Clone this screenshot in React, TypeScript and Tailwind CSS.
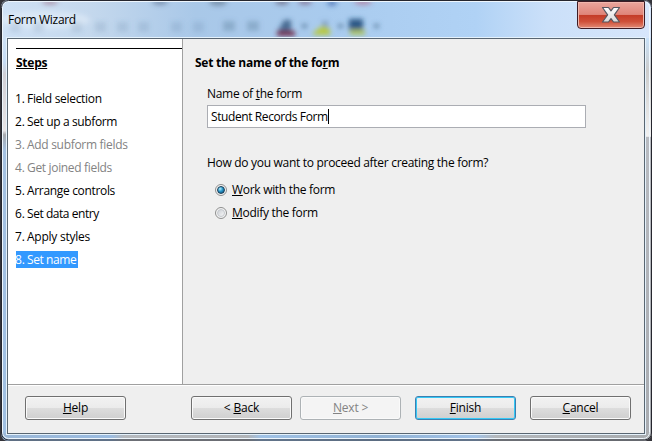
import type { ReactNode } from "react";

type Step = { label: string; tracking: string; state?: "disabled" | "active" };

const steps: Step[] = [
  { label: "Field selection", tracking: "tracking-[-0.3px]" },
  { label: "Set up a subform", tracking: "tracking-[-0.37px]" },
  { label: "Add subform fields", tracking: "tracking-[-0.3px]", state: "disabled" },
  { label: "Get joined fields", tracking: "tracking-[-0.33px]", state: "disabled" },
  { label: "Arrange controls", tracking: "tracking-[-0.33px]" },
  { label: "Set data entry", tracking: "tracking-[-0.45px]" },
  { label: "Apply styles", tracking: "tracking-[-0.25px]" },
  { label: "Set name", tracking: "tracking-[-0.4px]", state: "active" },
];

function Key({ children }: { children: ReactNode }) {
  return <span className="underline decoration-1 underline-offset-1">{children}</span>;
}

function StepRow({ step, index }: { step: Step; index: number }) {
  const color =
    step.state === "active"
      ? "bg-[#3399ff] text-white w-[62px]"
      : step.state === "disabled"
        ? "text-[#838383]"
        : "text-black";
  return (
    <li className={`flex h-[17px] items-center ${color}`}>
      <span className="-ml-px w-3 shrink-0 tracking-[-0.2px]">{index}.</span>
      <span className={step.tracking}>{step.label}</span>
    </li>
  );
}

function Button({ children, kind = "normal" }: { children: ReactNode; kind?: "normal" | "disabled" | "default" }) {
  const look =
    kind === "disabled"
      ? "border-[#adb2b5] bg-[#f4f4f4] text-[#838383] shadow-[inset_0_0_0_1px_#fafafa]"
      : kind === "default"
        ? "border-[#3c7fb1] bg-[linear-gradient(to_bottom,#f2f2f2_0%,#ebebeb_49%,#dddddd_50%,#cfcfcf_100%)] shadow-[inset_0_0_0_1px_#35c8f5]"
        : "border-[#707070] bg-[linear-gradient(to_bottom,#f2f2f2_0%,#ebebeb_49%,#dddddd_50%,#cfcfcf_100%)] shadow-[inset_0_0_0_1px_#fafafa]";
  return (
    <button className={`flex h-6 w-[101px] items-center justify-center rounded-[3px] border leading-4 tracking-[-0.2px] ${look}`}>
      <span>{children}</span>
    </button>
  );
}

function Radio({ children, checked = false }: { children: ReactNode; checked?: boolean }) {
  return (
    <label className="flex h-[17px] items-center gap-[5px]">
      <span className="flex size-3 shrink-0 items-center justify-center rounded-full border border-[#8e8f8f] bg-[#f4f4f4]">
        <span
          className={
            checked
              ? "size-2 rounded-full border border-[#183c56] bg-[radial-gradient(circle_at_35%_30%,#b7f0ff_0%,#2897ca_45%,#104269_100%)]"
              : "size-2 rounded-full border border-[#c4c8cd] bg-linear-to-br from-[#cbcfd5] to-[#f7f7f7]"
          }
        />
      </span>
      <span>{children}</span>
    </label>
  );
}

function GlassBackdrop() {
  return (
    <svg className="absolute inset-0" width="652" height="441" viewBox="0 0 652 441">
      <defs>
        <linearGradient id="top" x1="0" x2="1" y1="0" y2="0">
          <stop offset="0" stopColor="#cfe1f5" />
          <stop offset=".14" stopColor="#c4d8ed" />
          <stop offset=".3" stopColor="#a9c8e8" />
          <stop offset=".5" stopColor="#a9cbee" />
          <stop offset=".73" stopColor="#b0d2f5" />
          <stop offset=".84" stopColor="#cbe0f9" />
          <stop offset="1" stopColor="#d7e6fb" />
        </linearGradient>
        <linearGradient id="left" x1="0" x2="0" y1="0" y2="1">
          <stop offset="0" stopColor="#cfe2f6" />
          <stop offset=".06" stopColor="#c6dcf4" />
          <stop offset=".09" stopColor="#d0cfd5" />
          <stop offset=".23" stopColor="#e6e4e6" />
          <stop offset=".24" stopColor="#a7aaaf" />
          <stop offset=".28" stopColor="#a4c1e1" />
          <stop offset="1" stopColor="#9fbfe2" />
        </linearGradient>
        <linearGradient id="right" x1="0" x2="0" y1="0" y2="1">
          <stop offset="0" stopColor="#c8e1f8" />
          <stop offset=".08" stopColor="#cccccc" />
          <stop offset=".244" stopColor="#f1f1f1" />
          <stop offset=".246" stopColor="#b8bbc1" />
          <stop offset="1" stopColor="#a8abb0" />
        </linearGradient>
        <linearGradient id="bottom" x1="0" x2="1" y1="0" y2="0">
          <stop offset="0" stopColor="#9bb8d8" />
          <stop offset=".17" stopColor="#9bbce1" />
          <stop offset=".19" stopColor="#b5b9be" />
          <stop offset=".38" stopColor="#b1b4b8" />
          <stop offset=".4" stopColor="#a0c2e6" />
          <stop offset=".58" stopColor="#92b3d5" />
          <stop offset=".73" stopColor="#a2c3e8" />
          <stop offset=".76" stopColor="#b4b8bc" />
          <stop offset="1" stopColor="#a7abaf" />
        </linearGradient>
        <filter id="soft" x="-50%" y="-50%" width="200%" height="200%">
          <feGaussianBlur stdDeviation="2.8" />
        </filter>
        <clipPath id="bar"><rect x="2" y="2" width="648" height="35" /></clipPath>
      </defs>
      <rect width="652" height="39" fill="url(#top)" />
      <rect y="38" width="8" height="403" fill="url(#left)" />
      <rect x="644" y="38" width="8" height="403" fill="url(#right)" />
      <rect y="433" width="652" height="8" fill="url(#bottom)" />
      <g clipPath="url(#bar)">
        <g filter="url(#soft)">
          <ellipse cx="50" cy="2" rx="8" ry="3" fill="#96627a" opacity=".5" />
          <ellipse cx="160" cy="2" rx="8" ry="3" fill="#465b7e" opacity=".5" />
          <ellipse cx="218" cy="2" rx="9" ry="4" fill="#52657e" opacity=".5" />
          <ellipse cx="282" cy="2" rx="7" ry="3" fill="#5a4e68" opacity=".6" />
          <ellipse cx="305" cy="2" rx="7" ry="3" fill="#6d4666" opacity=".55" />
          <ellipse cx="332" cy="3" rx="5" ry="3" fill="#2854a0" opacity=".6" />
          <ellipse cx="363" cy="2" rx="9" ry="3" fill="#b64e70" opacity=".5" />
          <ellipse cx="45" cy="20" rx="45" ry="9" fill="#eaf2fb" opacity=".5" />
          {[15, 38, 76, 100, 122, 143, 176, 198].map((x) => (
            <rect key={x} x={x - 5} y="22" width="11" height="10" fill="#507194" opacity=".17" />
          ))}
          {[229, 253].map((x) => (
            <rect key={x} x={x - 6} y="21" width="12" height="10" fill="#507194" opacity=".34" />
          ))}
          <path d="M278 31l6-11h7v16h-13z" fill="#30547c" opacity=".8" />
          <path d="M277 31h18v5h-18z" fill="#722b48" />
          <path d="M322 21h6v8h-6z" fill="#607e99" opacity=".55" />
          <path d="M313 33l9-7 8 3v6h-17z" fill="#b8c943" />
          <path d="M349 19h14v12h-14z" fill="#1d4c7a" opacity=".9" />
          <path d="M350 30h15v5h-15z" fill="#afc663" />
          {[304, 340, 376].map((x) => (
            <rect key={x} x={x - 2} y="24" width="5" height="4" fill="#3f617f" opacity=".65" />
          ))}
        </g>
      </g>
      <rect x="2.5" y="1.5" width="647" height="437" rx="6" fill="none" stroke="#eef6fd" />
      <rect x="1.5" y=".5" width="650" height="439.5" rx="7" fill="none" stroke="#25262e" />
      <path d="M0 0h7Q1 1 1 8v425q0 7 7 8H0zM652 0h-6q5 2 6 7zM652 441h-7q6-2 7-7z" fill="#34343a" />
    </svg>
  );
}

export default function App() {
  return (
    <div className="relative flex h-[441px] w-[652px] flex-col overflow-hidden px-[7px] pb-[7px] font-['Open_Sans','Noto_Sans',sans-serif] text-[12px] leading-[17px] tracking-[-0.3px] text-black">
      <GlassBackdrop />
      <header className="relative flex h-[38px] shrink-0 items-start justify-between">
        <h1 className="pt-[11px] pl-px">Form Wizard</h1>
        <button
          aria-label="Close"
          className="mt-px flex h-7 w-[68px] items-center justify-center rounded-b-[4px] border border-[#3d1c25] bg-[linear-gradient(to_bottom,#e9a69d_0%,#df8579_48%,#c33b26_50%,#cf5039_75%,#e28b76_100%)] shadow-[inset_0_0_0_1px_#efb7ad]"
        >
          <svg width="20" height="18" viewBox="0 0 20 18">
            <defs>
              <linearGradient id="cross" x2="0" y2="1">
                <stop stopColor="#fff" />
                <stop offset="1" stopColor="#d8d8d8" />
              </linearGradient>
            </defs>
            <path d="M1.5 1.5h6L10 4.8l2.5-3.3h6L13.4 8.8l5.1 7.2h-6L10 12.7 7.5 16h-6l5.1-7.2z" fill="url(#cross)" stroke="#555760" strokeWidth="1.2" strokeLinejoin="round" />
          </svg>
        </button>
      </header>
      <main className="relative flex min-h-0 flex-1 flex-col border border-[#596672] bg-[#efefef] shadow-[0_0_0_1px_#e5f2fc]">
        <div className="flex h-[345px] shrink-0">
          <nav className="w-[175px] border-r border-[#a0a0a0] bg-white pt-[9px] pl-2">
            <div className="border-t border-black pt-[5px]">
              <h2 className="text-[12px] font-bold tracking-[-0.25px] underline decoration-1 underline-offset-1">Steps</h2>
            </div>
            <ol className="mt-[19px] flex flex-col gap-1.5">
              {steps.map((step, i) => (
                <StepRow key={step.label} step={step} index={i + 1} />
              ))}
            </ol>
          </nav>
          <section className="flex-1 pt-[15px] pl-3">
            <h2 className="font-bold tracking-[-0.25px]">Set the name of the fo<Key>r</Key>m</h2>
            <div className="mt-[14px] pl-3">
              <label className="block">Name of <Key>t</Key>he form</label>
              <div className="mt-[3px] flex h-[23px] w-[379px] items-center border border-[#abadb3] bg-white pl-[3px] tracking-[-0.4px]">
                <span>Student Records Form</span>
                <span className="h-[15px] w-px bg-black" />
              </div>
              <p className="mt-[26px]">How do you want to proceed after creating the form?</p>
              <div className="mt-2.5 flex flex-col gap-1.5 pl-2">
                <Radio checked><Key>W</Key>ork with the form</Radio>
                <Radio><Key>M</Key>odify the form</Radio>
              </div>
            </div>
          </section>
        </div>
        <footer className="flex flex-1 items-start border-t border-[#a0a0a0] pt-[11px] pl-[17px] shadow-[inset_0_1px_0_white]">
          <Button><Key>H</Key>elp</Button>
          <div className="ml-[65px] flex gap-2">
            <Button>&lt; <Key>B</Key>ack</Button>
            <Button kind="disabled"><Key>N</Key>ext &gt;</Button>
          </div>
          <div className="ml-[14px] flex gap-[14px]">
            <Button kind="default"><Key>F</Key>inish</Button>
            <Button><Key>C</Key>ancel</Button>
          </div>
        </footer>
      </main>
    </div>
  );
}
